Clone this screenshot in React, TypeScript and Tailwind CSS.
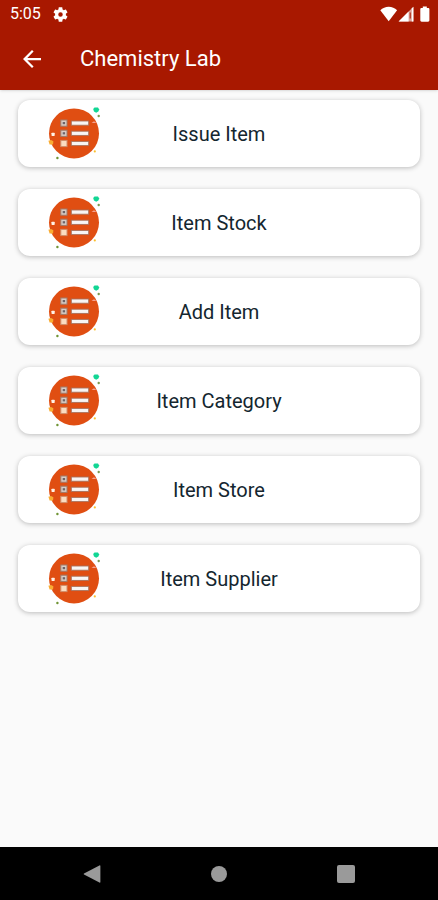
import React from 'react';

const menuItems = [
  'Issue Item',
  'Item Stock',
  'Add Item',
  'Item Category',
  'Item Store',
  'Item Supplier',
];

const ListIcon: React.FC = () => (
  <svg className="h-14 w-[54px]" viewBox="0 2 54 56" aria-hidden="true">
    <circle cx="26" cy="29.4" r="25" fill="#e04e12" />

    {/* Check boxes */}
    <g fill="#d9cdc6" stroke="#a07a68" strokeWidth="1">
      <rect x="12.8" y="16" width="6.2" height="6.2" />
      <rect x="12.8" y="26.2" width="6.2" height="6.2" />
      <rect x="12.8" y="36.4" width="6.2" height="6.2" fill="#fbdcc0" stroke="#d08e6c" />
    </g>
    <g fill="#6f6468">
      <rect x="14.7" y="18" width="2.4" height="2.2" />
      <rect x="14.7" y="28.2" width="2.4" height="2.2" />
    </g>

    {/* Lines */}
    <g fill="#f7f5f4" stroke="#a8705a" strokeWidth="0.9">
      <rect x="23.3" y="17" width="17.4" height="4.2" />
      <rect x="23.3" y="27.2" width="17.4" height="4.2" />
      <rect x="23.3" y="37.4" width="17.4" height="4.2" />
    </g>

    {/* Confetti */}
    <path d="M45.2 5 46.5 3.4H50L51.2 5.4 50.4 7.6 48.2 8.8 46 7.6Z" fill="#12d694" />
    <circle cx="50.7" cy="12" r="1.2" fill="#7c9a50" />
    <path d="M43.5 19 46 17.2 48.5 19Z" fill="#f7a08c" />
    <rect x="3.5" y="28.7" width="3.2" height="3.2" rx="0.6" fill="#fff1e6" />
    <path d="M0.4 36.8 3 36 5.4 37.2 5 40.4H1.6Z" fill="#f9ac33" />
    <circle cx="46.8" cy="47.4" r="1.1" fill="#fbc02d" />
    <circle cx="9.4" cy="54" r="1.2" fill="#6f9434" />
  </svg>
);

const StatusBar: React.FC = () => (
  <div className="flex h-7 items-center justify-between pr-2 pl-[10px]">
    <div className="flex items-center gap-3">
      <span className="text-base leading-7">5:05</span>
      <svg className="h-[15px] w-[15px]" viewBox="2 2 20 20" fill="currentColor" aria-hidden="true">
        <path d="M19.14 12.94c.04-.3.06-.61.06-.94s-.02-.64-.07-.94l2.03-1.58c.18-.14.23-.41.12-.61l-1.92-3.32c-.12-.22-.37-.29-.59-.22l-2.39.96c-.5-.38-1.03-.7-1.62-.94l-.36-2.54c-.04-.24-.24-.41-.48-.41h-3.84c-.24 0-.43.17-.47.41l-.36 2.54c-.59.24-1.13.57-1.62.94l-2.39-.96c-.22-.08-.47 0-.59.22L2.74 8.87c-.12.21-.08.47.12.61l2.03 1.58c-.05.3-.09.63-.09.94s.02.64.07.94l-2.03 1.58c-.18.14-.23.41-.12.61l1.92 3.32c.12.22.37.29.59.22l2.39-.96c.5.38 1.03.7 1.62.94l.36 2.54c.05.24.24.41.48.41h3.84c.24 0 .44-.17.47-.41l.36-2.54c.59-.24 1.13-.56 1.62-.94l2.39.96c.22.08.47 0 .59-.22l1.92-3.32c.12-.22.07-.47-.12-.61l-2.01-1.58zM12 15a3 3 0 1 1 0-6 3 3 0 0 1 0 6z" />
      </svg>
    </div>
    <svg className="h-4 w-[50px]" viewBox="0 0 50 16" fill="currentColor" aria-hidden="true">
      <path d="M0.3 4.2C2.6 2 5.5 0.8 8.7 0.8s6.1 1.2 8.4 3.4L8.7 15.2Z" />
      <path d="M18.6 15.6 33.4 0.8V15.6Z" fillOpacity="0.6" />
      <path d="M18.6 15.6 28.6 5.6V15.6Z" />
      <path d="M29.6 6.6h1.4v6h-1.4z" fill="#a81800" fillOpacity="0.7" />
      <path d="M31.8 2.4 33.4 0.8V15.6h-1.6z" />
      <path d="M42.8 0.6h4v1.3H48c.9 0 1.4.5 1.4 1.4v11c0 .9-.5 1.4-1.4 1.4h-6.3c-.9 0-1.4-.5-1.4-1.4v-11c0-.9.5-1.4 1.4-1.4h1.1Z" />
    </svg>
  </div>
);

const App: React.FC = () => {
  return (
    <div className="flex min-h-screen flex-col bg-[#fafafa] font-[Roboto,sans-serif]">
      <header className="bg-[#a81800] text-white shadow-sm">
        <StatusBar />
        <div className="flex h-[62px] items-center gap-9 pl-5">
          <button type="button" aria-label="Back" className="flex h-6 w-6 items-center justify-center">
            <svg className="h-[18px] w-[18px]" viewBox="4 4 16 16" fill="currentColor" aria-hidden="true">
              <path d="M20 11H7.83l5.59-5.59L12 4l-8 8 8 8 1.41-1.41L7.83 13H20v-2z" />
            </svg>
          </button>
          <h1 className="text-[22px] leading-7">Chemistry Lab</h1>
        </div>
      </header>

      {/* Menu cards */}
      <main className="flex flex-1 flex-col gap-[22px] px-[18px] pt-[10px] pb-6">
        {menuItems.map((item) => (
          <button
            key={item}
            type="button"
            className="grid h-[67px] grid-cols-[1fr_auto_1fr] items-center rounded-xl bg-white px-[30px] shadow-[0_1px_5px_rgba(0,0,0,0.25)]"
          >
            <ListIcon />
            <span className="text-xl text-[#14262f]">{item}</span>
          </button>
        ))}
      </main>

      {/* System navigation */}
      <nav className="grid h-[53px] grid-cols-3 items-center justify-items-center bg-black px-7 text-[#9a9a9a]">
        <button type="button" aria-label="Back">
          <svg className="h-[18px] w-[18px]" viewBox="0 0 18 18" fill="currentColor" aria-hidden="true">
            <path d="M16.4 0.4Q17.4 0 17.4 1V17Q17.4 18 16.4 17.6L1 9.5Q0.2 9 1 8.5Z" />
          </svg>
        </button>
        <button type="button" aria-label="Home">
          <span className="block h-4 w-4 rounded-full bg-[#9a9a9a]" />
        </button>
        <button type="button" aria-label="Recent apps">
          <span className="block h-[18px] w-[18px] rounded-xs bg-[#9a9a9a]" />
        </button>
      </nav>
    </div>
  );
};

export default App;
